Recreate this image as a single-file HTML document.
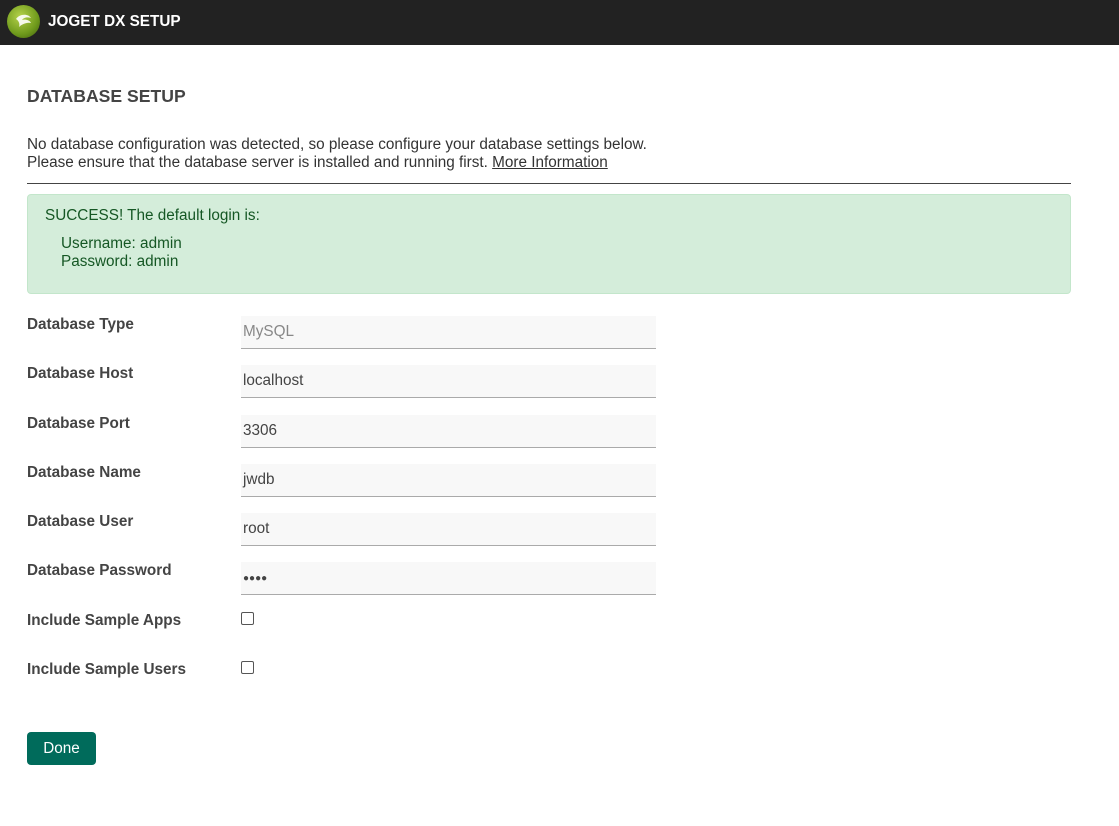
<!DOCTYPE html>
<html><head><meta charset="utf-8"><style>
body{margin:0;width:1119px;height:826px;background:#fff;font-family:"Liberation Sans",sans-serif;color:#444;position:relative;overflow:hidden}
.hdr{position:absolute;left:0;top:0;width:1119px;height:45px;background:#222;}
.logo{position:absolute;left:7px;top:5px;width:33px;height:33px;border-radius:50%;background:radial-gradient(circle at 40% 35%,#b5d24a,#6f9a1c 60%,#3d5a0c);}
.ht{position:absolute;left:48px;top:13px;color:#fff;font-weight:bold;font-size:15.3px}
.a{position:absolute}
h1{position:absolute;left:27px;top:86px;margin:0;font-size:17.6px;font-weight:bold;color:#444}
.p{left:27px;top:136px;font-size:15.3px;line-height:18px;color:#333}
.hr{left:27px;top:183px;width:1044px;height:1px;background:#444}
.ok{left:27px;top:194px;width:1042px;height:98px;background:#d4edda;border:1px solid #c3e6cb;border-radius:4px;color:#155724;font-size:15.3px}
.lbl{left:27px;font-weight:bold;font-size:15.3px;color:#444}
.inp{left:241px;width:415px;height:33px;background:#f8f8f8;border-bottom:1px solid #aaa;font-size:15.3px;color:#444;box-sizing:border-box;padding:7px 2px}
.cb{left:241px;width:11px;height:11px;border:1px solid #555;border-radius:2px;background:#fff}
.btn{left:27px;top:732px;width:69px;height:33px;background:#006b5b;border-radius:4px;color:#fff;font-size:15.3px;text-align:center;line-height:33px}
</style></head><body>
<div class="hdr"><div class="logo"><svg width="33" height="33" viewBox="0 0 33 33"><path d="M9 14c3-5 12-6 15-1-3-1-7-1-9 2 3-1 8 0 9 3-4-1-9 1-12 4 1-3 0-6-3-8z" fill="#fff" opacity=".9"/></svg></div><div class="ht">JOGET DX SETUP</div></div>
<h1>DATABASE SETUP</h1>
<div class="a p">No database configuration was detected, so please configure your database settings below.<br>Please ensure that the database server is installed and running first. <span style="text-decoration:underline">More Information</span></div>
<div class="a hr"></div>
<div class="a ok"><div class="a" style="left:17px;top:12px">SUCCESS! The default login is:</div><div class="a" style="left:33px;top:40px;line-height:18px">Username: admin<br>Password: admin</div></div>
<div class="a lbl" style="top:316px">Database Type</div><div class="a inp" style="top:316px;color:#888">MySQL</div>
<div class="a lbl" style="top:365px">Database Host</div><div class="a inp" style="top:365px">localhost</div>
<div class="a lbl" style="top:415px">Database Port</div><div class="a inp" style="top:415px">3306</div>
<div class="a lbl" style="top:464px">Database Name</div><div class="a inp" style="top:464px">jwdb</div>
<div class="a lbl" style="top:513px">Database User</div><div class="a inp" style="top:513px">root</div>
<div class="a lbl" style="top:562px">Database Password</div><div class="a inp" style="top:562px;font-size:10px;padding-top:11px">●●●●</div>
<div class="a lbl" style="top:612px">Include Sample Apps</div><div class="a cb" style="top:612px"></div>
<div class="a lbl" style="top:661px">Include Sample Users</div><div class="a cb" style="top:661px"></div>
<div class="a btn">Done</div>
</body></html>
